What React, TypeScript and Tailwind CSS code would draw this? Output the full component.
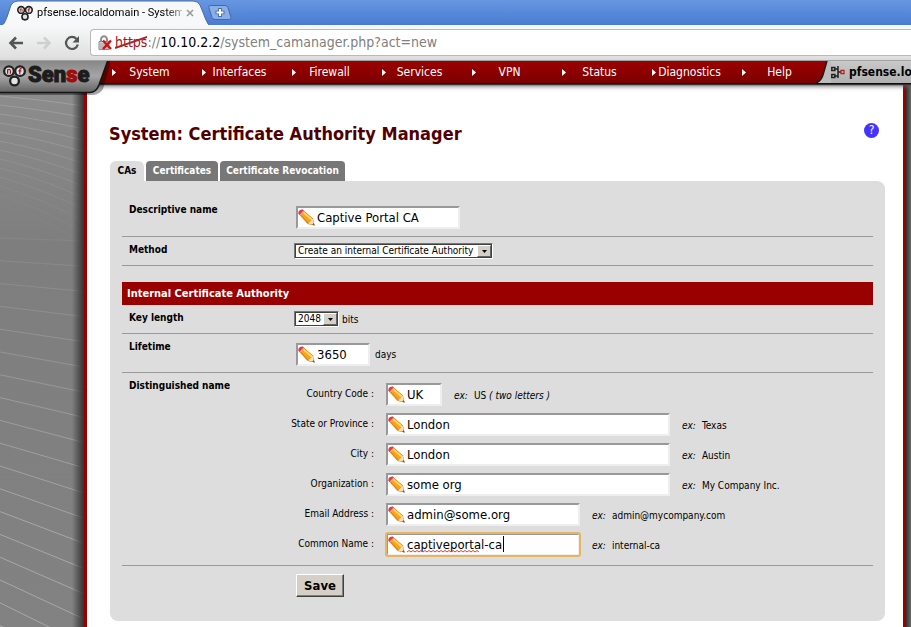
import React from "react";
import clsx from "clsx";

const ui = "font-['DejaVu_Sans_Condensed','DejaVu_Sans',sans-serif]";

function Rings({ className }: { className: string }) {
  return (
    <svg className={className} viewBox="0 0 20 20" fill="#e4e4e4" stroke="#222" strokeWidth="2" aria-hidden="true">
      <circle cx="10" cy="14.8" r="3.8" />
      <circle cx="5.2" cy="6.2" r="4.2" />
      <circle cx="14.8" cy="6.2" r="4.2" />
      <path d="M4 8.400V4.600M4 5.200Q6.400 4 6.400 6V8.400" fill="none" stroke="#a11" strokeWidth="1.100" />
      <path d="M16.200 4.200Q14.600 3.600 14.600 5.200V8.600M13.400 6H16" fill="none" stroke="#a11" strokeWidth="1.100" />
    </svg>
  );
}

function Pencil() {
  return (
    <svg className="h-[17px] w-[17px] shrink-0" viewBox="0 0 17 17" aria-hidden="true">
      <path d="M.5 4.800 4.600.6 15 9.600 16.600 16.400 9.800 15Z" fill="#c9741c" />
      <path d="M1.200 4.800 4.600 1.400 14.400 9.800 10 14.300Z" fill="#f9a51c" />
      <path d="M4.600 2.600 14 10.800" stroke="#ffd863" strokeWidth="1.800" />
      <path d="M1.800 5.200 10 14" stroke="#e48a12" strokeWidth="1.200" />
      <path d="M.4 4.800Q-.2 1 4.600.6L5.800 1.800 1.800 6Z" fill="#e23a4a" />
      <path d="M2 6.200 6 2" stroke="#f3a58c" strokeWidth="1.200" />
      <path d="M10 14.600 14.800 9.800 16.200 16Z" fill="#f7dfb2" />
      <path d="M14.200 15.600 15.800 14 16.700 16.700Z" fill="#6d5440" />
    </svg>
  );
}

function Stripes({ className }: { className: string }) {
  const upper = Array.from({ length: 13 }, (_, i) => i);
  const lower = Array.from({ length: 24 }, (_, i) => i);
  return (
    <svg className={className} viewBox="0 0 84 544" preserveAspectRatio="xMinYMin slice" aria-hidden="true">
      <g stroke="#b8b8b8" fill="none">
        {upper.map((i) => (
          <path key={i} opacity={0.45 - i * 0.034} d={`M0 ${13 + i * 9}Q45 ${17 + i * 10} 84 ${23 + i * 11.5}`} />
        ))}
        {lower.map((i) => (
          <path key={i} opacity={Math.min(0.7, 0.15 + i * 0.045)} d={`M0 ${155 + i * 22.8}L84 ${158 + i * 25.2}`} />
        ))}
      </g>
    </svg>
  );
}

function BrowserChrome() {
  return (
    <header>
      <div className="flex h-[25px] bg-linear-to-b from-[#6797e2] to-[#4a7bd0]">
        <div className="relative flex h-[26px] w-[212px] shrink-0 items-center pl-[17px]">
          <svg className="absolute inset-0 h-full w-full" viewBox="0 0 212 26" preserveAspectRatio="none" aria-hidden="true">
            <path d="M0 26C4 25 5 22 7 17L11 5Q13 1 18 1H193Q198 1 200 5L206 20Q208 26 212 26Z" fill="#f7f8f9" stroke="#4a6ba5" strokeWidth="1" />
            <path d="M0 25H212V26H0Z" fill="#f7f8f9" />
          </svg>
          <Rings className="relative h-4 w-4" />
          <span className="relative ml-1 w-[145px] bg-linear-to-r from-black from-85% to-[#aaa] bg-clip-text font-['Roboto',sans-serif] text-[11px] whitespace-nowrap text-transparent">
            pfsense.localdomain - System
          </span>
          <button type="button" aria-label="Close tab" className="relative ml-1">
            <svg className="h-2 w-2" viewBox="0 0 8 8" stroke="#9a9a9a" strokeWidth="1.6" aria-hidden="true">
              <path d="M1 1 7 7M7 1 1 7" />
            </svg>
          </button>
        </div>
        <button type="button" aria-label="New tab" className="-ml-1 h-[15px] w-6 self-center">
          <svg className="h-full w-full" viewBox="0 0 24 15" aria-hidden="true">
            <path d="M2.500.5H17Q19 .5 20 2.500L23 12.500Q23.500 14.500 21 14.500H7Q5 14.500 4 12.500L.8 2.500Q.3.5 2.500.5Z" fill="#8aaee6" stroke="#4469a8" />
            <path d="M12 3V12M7.500 7.500H16.500" stroke="#4469a8" strokeWidth="3.600" />
            <path d="M12 4V11M8.500 7.500H15.500" stroke="#fff" strokeWidth="2" />
          </svg>
        </button>
      </div>
      <div className="flex h-9 items-center border-b border-[#a9a9a9] bg-linear-to-b from-[#f7f8f9] to-[#dedede] pl-2">
        <button type="button" aria-label="Back">
          <svg className="h-4 w-4" viewBox="0 0 16 16" fill="none" stroke="#555" strokeWidth="2.600" aria-hidden="true">
            <path d="M15 8H3M8 2.500 2.500 8 8 13.500" />
          </svg>
        </button>
        <button type="button" aria-label="Forward" className="ml-3">
          <svg className="h-4 w-4" viewBox="0 0 16 16" fill="none" stroke="#cfcfcf" strokeWidth="2.600" aria-hidden="true">
            <path d="M1 8H13M8 2.500 13.500 8 8 13.500" />
          </svg>
        </button>
        <button type="button" aria-label="Reload" className="ml-3">
          <svg className="h-4 w-4" viewBox="0 0 16 16" aria-hidden="true">
            <path d="M12.500 4A6 6 0 1 0 13.800 9.500" fill="none" stroke="#555" strokeWidth="2.200" />
            <path d="M15 1V7.500H8.500Z" fill="#555" />
          </svg>
        </button>
        <div className="ml-[10px] flex h-[27px] min-w-0 flex-1 items-center rounded-l border border-r-0 border-[#b9b9b9] bg-white pl-[7px]">
          <svg className="h-4 w-[14px] shrink-0" viewBox="0 0 14 16" aria-hidden="true">
            <path d="M3 7V4.500A3 3.300 0 0 1 9 4.500V7" fill="none" stroke="#8d8d8d" strokeWidth="2" />
            <path d="M1 6.500H11V14.500H1Z" fill="#d3d3d3" stroke="#8d8d8d" />
            <path d="M2 9H10M2 11H10M2 13H10" stroke="#a5a5a5" />
            <path d="M5 5.500 13 14M13 5.500 5 14" stroke="#d40f0f" strokeWidth="2.400" />
          </svg>
          <p className="ml-[3px] whitespace-nowrap text-[14px] text-[#808080]">
            <span className="relative text-[#a5121b]">
              https
              <svg className="absolute inset-0 h-full w-full" viewBox="0 0 32 17" preserveAspectRatio="none" aria-hidden="true">
                <path d="M0 15 32 3" stroke="#b0202a" strokeWidth="2" />
              </svg>
            </span>
            ://<span className="text-black">10.10.2.2</span>/system_camanager.php?act=new
          </p>
        </div>
      </div>
    </header>
  );
}

const menu = ["System", "Interfaces", "Firewall", "Services", "VPN", "Status", "Diagnostics", "Help"];

function MenuBar() {
  return (
    <div className="relative z-10 flex h-[22px] bg-linear-to-b from-[#9b0000] to-[#7d0000] shadow-[0_1px_0_#300,0_2px_1px_#333,0_3px_5px_#666]">
      <div className="relative w-[104px] shrink-0">
        <svg className="absolute top-0 left-0 h-9 w-[112px]" viewBox="0 0 112 36" aria-hidden="true">
          <defs>
            <linearGradient id="steel" x2="0" y2="1">
              <stop offset="0" stopColor="#858585" />
              <stop offset=".5" stopColor="#a5a5a5" />
              <stop offset="1" stopColor="#626262" />
            </linearGradient>
          </defs>
          <path d="M0 34H94Q100 33 103 28L110 4V0H0Z" fill="#000" opacity=".35" />
          <path d="M-1-1H108L99 24Q96 31.500 90 31.500H-1Z" fill="url(#steel)" stroke="#151515" strokeWidth="1.600" />
        </svg>
        <Rings className="absolute top-[3px] left-[3px] h-[23px] w-[23px]" />
        <span className="absolute top-0 left-7 font-['Roboto',sans-serif] text-[22px] leading-7 font-black text-[#1c1c1c] [-webkit-text-stroke:1px_currentColor]">
          Sen<span className="text-[#a00c0c]">s</span>e
        </span>
      </div>
      <nav className="flex">
        {menu.map((m) => (
          <a key={m} href="#" className="flex w-[90px] items-center pr-[11px] pl-2 text-[12px] text-white">
            <svg className="h-[7px] w-1 shrink-0" viewBox="0 0 4 7" aria-hidden="true">
              <path d="M0 0 4 3.500 0 7Z" fill="#fff" />
            </svg>
            <span className="flex-1 text-center">{m}</span>
          </a>
        ))}
      </nav>
      <div className="relative -ml-2 flex min-w-0 flex-1 items-center overflow-hidden pl-[15px]">
        <svg className="absolute top-0 left-0 h-full w-4" viewBox="0 0 16 22" preserveAspectRatio="none" aria-hidden="true">
          <path d="M16 0H11L7 14Q5 20 0 22H16Z" fill="#bdbdbd" />
          <path d="M11 0 7 14Q5 20 0 22" fill="none" stroke="#1a1a1a" strokeWidth="1.400" />
        </svg>
        <div className="relative flex h-full flex-1 items-center bg-linear-to-b from-[#c9c9c9] to-[#b0b0b0]">
          <svg className="h-[14px] w-[14px] shrink-0" viewBox="0 0 14 14" fill="none" stroke="#222" aria-hidden="true">
            <path d="M.8 2.500H3.800V5.500H.8ZM.8 9.500H3.800V12.500H.8ZM4 4H7M4 11H7M7 1V13M7 7H10" strokeWidth="1.500" />
            <path d="M10 5.500H13V8.500H10Z" stroke="#b02020" fill="#ddd" strokeWidth="1.300" />
          </svg>
          <span className="ml-1 text-[12px] font-bold whitespace-nowrap">pfsense.localdomain</span>
        </div>
      </div>
    </div>
  );
}

function Field(props: { id: string; value: string; width: string; focused?: boolean }) {
  return (
    <span
      className={clsx(
        "flex h-[23px] items-center border-2 border-t-[#999] border-r-[#eee] border-b-[#eee] border-l-[#999] bg-white",
        props.focused && "rounded-xs outline-2 -outline-offset-1 outline-[#e5b55f]",
        props.width,
      )}
    >
      <Pencil />
      {props.focused ? (
        <span className="relative ml-[2px] min-w-0 flex-1">
          <input id={props.id} defaultValue={props.value} spellCheck={false} className="block w-full bg-transparent text-[13px] leading-[17px] outline-none" />
          <svg className="absolute top-[14px] left-0 h-[3px] w-[74px]" viewBox="0 0 74 3" aria-hidden="true">
            <path d={"M0 2" + Array.from({ length: 18 }, () => "l2-1.500 2 1.500").join("")} fill="none" stroke="#e33" />
          </svg>
          <i className="absolute top-0 left-[96px] h-4 w-px bg-black" />
        </span>
      ) : (
        <input id={props.id} defaultValue={props.value} className="ml-[2px] min-w-0 flex-1 bg-transparent text-[13px] leading-[17px] outline-none" />
      )}
    </span>
  );
}

function Select({ id, value, width }: { id: string; value: string; width: string }) {
  return (
    <span className={clsx("relative flex h-4 border border-t-[#777] border-r-white border-b-white border-l-[#777]", width)}>
      <select id={id} className="h-full w-full appearance-none border border-[#404040] bg-white pl-[2px] text-[10px] leading-3">
        <option>{value}</option>
      </select>
      <span className="pointer-events-none absolute inset-y-px right-px flex w-[14px] items-center justify-center border border-t-white border-r-[#666] border-b-[#666] border-l-white bg-[#d4d0c8]">
        <svg className="h-[3px] w-[5px]" viewBox="0 0 5 3" aria-hidden="true">
          <path d="M0 0H5L2.500 3Z" />
        </svg>
      </span>
    </span>
  );
}

const names = [
  { id: "country", label: "Country Code", value: "UK", width: "w-14", example: "US" },
  { id: "state", label: "State or Province", value: "London", width: "w-[284px]", example: "Texas" },
  { id: "city", label: "City", value: "London", width: "w-[284px]", example: "Austin" },
  { id: "org", label: "Organization", value: "some org", width: "w-[284px]", example: "My Company Inc." },
  { id: "email", label: "Email Address", value: "admin@some.org", width: "w-[194px]", example: "admin@mycompany.com" },
  { id: "cn", label: "Common Name", value: "captiveportal-ca", width: "w-[194px]", example: "internal-ca" },
];

function Row(props: { label: string; htmlFor?: string; className: string; children: React.ReactNode }) {
  return (
    <div className={clsx("flex border-b border-[#999]", props.className)}>
      <label htmlFor={props.htmlFor} className="w-[172px] shrink-0 pt-1 pl-[7px] text-[10px] leading-[14px] font-bold">
        {props.label}
      </label>
      {props.children}
    </div>
  );
}

export default function App() {
  return (
    <div className={clsx("flex min-h-screen flex-col overflow-hidden bg-white text-black", ui)}>
      <BrowserChrome />
      <MenuBar />
      <div className="flex flex-1">
        <aside className="relative w-[84px] shrink-0 overflow-hidden bg-linear-to-b from-[#8d8d8d] via-[#7e7e7e] via-30% to-[#828282]">
          <Stripes className="absolute inset-0 h-full w-full" />
          <div className="absolute inset-y-0 right-0 w-3 bg-linear-to-r from-transparent to-[#333]" />
        </aside>
        <main className="min-w-0 flex-1 border-x-[3px] border-[#900] pt-[39px] pr-[18px] pb-[6px] pl-[23px]">
          <div className="flex items-center justify-between pr-[6px]">
            <h1 className="-ml-px text-[18px] leading-6 font-bold text-[#500000]">System: Certificate Authority Manager</h1>
            <a href="#" aria-label="Help" className="mb-2 flex h-[15px] w-[15px] items-center justify-center rounded-full bg-[#4433ff] text-[12px] leading-none text-white">
              ?
            </a>
          </div>
          <div className="mt-[15px] flex gap-[2px] text-[10px] leading-5 font-bold whitespace-nowrap text-white">
            <a href="#" className="w-[34px] rounded-t-md bg-[#ddd] text-center text-black">CAs</a>
            <a href="#" className="w-[72px] rounded-t bg-[#777] text-center">Certificates</a>
            <a href="#" className="w-[125px] rounded-t bg-[#777] text-center">Certificate Revocation</a>
          </div>
          <form className="rounded-lg rounded-tl-none bg-[#ddd] px-3 pt-[18px] pb-6 text-[10px]">
            <Row label="Descriptive name" htmlFor="descr" className="h-[38px]">
              <div className="pt-[7px] pl-[2px]">
                <Field id="descr" value="Captive Portal CA" width="w-[164px]" />
              </div>
            </Row>
            <Row label="Method" htmlFor="method" className="h-[29px] pt-[2px]">
              <div className="pt-[4px]">
                <Select id="method" value="Create an internal Certificate Authority" width="w-[199px]" />
              </div>
            </Row>
            <h2 className="mt-4 bg-[#900] pl-[5px] text-[11px] leading-[23px] font-bold text-white">Internal Certificate Authority</h2>
            <Row label="Key length" htmlFor="keylen" className="h-[29px] pt-[2px]">
              <div className="flex h-5 items-center gap-[3px] pt-[4px]">
                <Select id="keylen" value="2048" width="w-[45px]" />
                bits
              </div>
            </Row>
            <Row label="Lifetime" htmlFor="lifetime" className="h-[39px] pt-[2px]">
              <div className="flex items-center gap-[5px] pl-[2px]">
                <Field id="lifetime" value="3650" width="w-[74px]" />
                days
              </div>
            </Row>
            <Row label="Distinguished name" className="h-[193px] pt-[2px]">
              <div className="pt-[8px]">
                {names.map((n) => (
                  <div key={n.id} className="flex h-[30px] items-start">
                    <label htmlFor={n.id} className="flex w-[92px] justify-end pt-1 pr-3 leading-[14px] whitespace-nowrap">
                      {n.label} :
                    </label>
                    <Field id={n.id} value={n.value} width={n.width} focused={n.id === "cn"} />
                    <p className="flex gap-[6px] pt-[6px] pl-3 leading-[14px] whitespace-nowrap">
                      <em>ex:</em>
                      <span>
                        {n.example}
                        {n.id === "country" && <em> ( two letters )</em>}
                      </span>
                    </p>
                  </div>
                ))}
              </div>
            </Row>
            <button type="button" className="mt-2 ml-[174px] block h-[23px] w-12 border border-t-white border-r-[#404040] border-b-[#404040] border-l-white bg-[#d4d0c8] text-[13px] leading-5 font-bold shadow-[inset_-1px_-1px_0_#808080]">
              Save
            </button>
          </form>
        </main>
        <aside className="w-[5px] shrink-0 bg-linear-to-r from-[#333] to-[#6a6a6a]" />
      </div>
    </div>
  );
}
